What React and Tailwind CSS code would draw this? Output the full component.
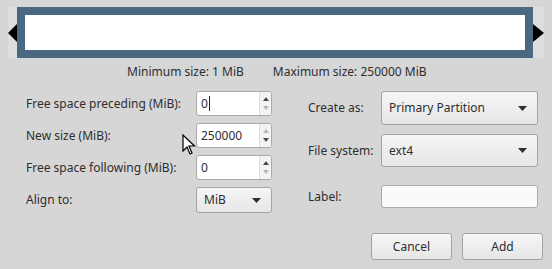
import React from "react";

function SpinBox({ value, upOn, downOn, caret }) {
    return (
        <div className="flex h-[25px] w-[76px] rounded-[3px] border border-[#a9a9a9] bg-white overflow-hidden">
            <div className="flex flex-1 items-center pl-[4px] text-[12px] text-[#2e2e2e]">
                {value}
                {caret && <span className="ml-[1px] inline-block h-[15px] w-px bg-[#222]"></span>}
            </div>
            <div className="flex w-[12px] flex-col items-center justify-center gap-[5px] border-l border-[#dcdcdc] bg-[#f3f3f3]">
                <svg width="6" height="4" viewBox="0 0 6 4">
                    <path d="M3 0 L6 4 L0 4 Z" fill={upOn ? "#4a4a4a" : "#b4b4b4"} />
                </svg>
                <svg width="6" height="4" viewBox="0 0 6 4">
                    <path d="M0 0 L6 0 L3 4 Z" fill={downOn ? "#4a4a4a" : "#b4b4b4"} />
                </svg>
            </div>
        </div>
    );
}

function Combo({ text, className }) {
    return (
        <div className={"flex items-center justify-between rounded-[3px] border border-[#a3a3a3] bg-gradient-to-b from-[#f6f6f6] to-[#e6e6e6] pl-[7px] pr-[10px] text-[12px] text-[#2e2e2e] " + className}>
            <span>{text}</span>
            <svg width="9" height="5" viewBox="0 0 9 5">
                <path d="M0 0 L9 0 L4.5 5 Z" fill="#2f2f2f" />
            </svg>
        </div>
    );
}

function Button({ children }) {
    return (
        <div className="flex h-[27px] w-[81px] items-center justify-center rounded-[3px] border border-[#a3a3a3] bg-gradient-to-b from-[#f6f6f6] to-[#e6e6e6] text-[12px] text-[#2e2e2e]">
            {children}
        </div>
    );
}

export default function App() {
    return (
        <div className="relative h-[269px] w-[552px] bg-[#d6d6d6] pt-[7px] font-['Noto_Sans',sans-serif] text-[#333]">
            {/* partition graphic */}
            <div className="mx-[8px] flex h-[51px] items-center bg-[#dddddd]">
                <svg width="9" height="18" viewBox="0 0 9 18">
                    <path d="M0 9 L9 0 L9 18 Z" fill="#000" />
                </svg>
                <div className="h-[51px] w-[516px] border-[8px] border-[#4b6883] bg-white"></div>
                <svg width="11" height="18" viewBox="0 0 11 18">
                    <path d="M0 0 L11 9 L0 18 Z" fill="#000" />
                </svg>
            </div>

            <div className="mt-[5px] flex h-[18px] items-center pl-[127px] text-[12px] text-[#2e2e2e]">
                <span>Minimum size: 1 MiB</span>
                <span className="ml-[29px]">Maximum size: 250000 MiB</span>
            </div>

            <div className="mt-[10px] flex">
                {/* left column */}
                <div className="ml-[26px] flex w-[246px] flex-col gap-[7px]">
                    <div className="flex items-center justify-between text-[12px] text-[#2e2e2e]">
                        <span>Free space preceding (MiB):</span>
                        <SpinBox value="0" upOn downOn={false} caret />
                    </div>
                    <div className="flex items-center justify-between text-[12px] text-[#2e2e2e]">
                        <span>New size (MiB):</span>
                        <SpinBox value="250000" upOn={false} downOn />
                    </div>
                    <div className="flex items-center justify-between text-[12px] text-[#2e2e2e]">
                        <span>Free space following (MiB):</span>
                        <SpinBox value="0" upOn downOn={false} />
                    </div>
                    <div className="flex items-center justify-between text-[12px] text-[#2e2e2e]">
                        <span>Align to:</span>
                        <Combo text="MiB" className="h-[26px] w-[76px]" />
                    </div>
                </div>

                {/* right column */}
                <div className="ml-[36px] flex w-[230px] flex-col">
                    <div className="flex items-center justify-between text-[12px] text-[#2e2e2e]">
                        <span>Create as:</span>
                        <Combo text="Primary Partition" className="h-[34px] w-[157px]" />
                    </div>
                    <div className="mt-[9px] flex items-center justify-between text-[12px] text-[#2e2e2e]">
                        <span>File system:</span>
                        <Combo text="ext4" className="h-[33px] w-[157px]" />
                    </div>
                    <div className="mt-[18px] flex items-center justify-between text-[12px] text-[#2e2e2e]">
                        <span>Label:</span>
                        <div className="h-[23px] w-[157px] rounded-[3px] border border-[#a9a9a9] bg-[#fafafa]"></div>
                    </div>
                </div>
            </div>

            <div className="mt-[20px] flex justify-end gap-[10px] pr-[9px]">
                <Button>Cancel</Button>
                <Button>Add</Button>
            </div>

            {/* mouse pointer */}
            <svg className="absolute left-[182px] top-[134px]" width="14" height="22" viewBox="0 0 14 22">
                <path d="M1 1 L1 17 L5 13 L8 20 L10 19 L7 12 L12.5 12 Z" fill="#fff" stroke="#000" strokeWidth="1.2" strokeLinejoin="miter" />
            </svg>
        </div>
    );
}
